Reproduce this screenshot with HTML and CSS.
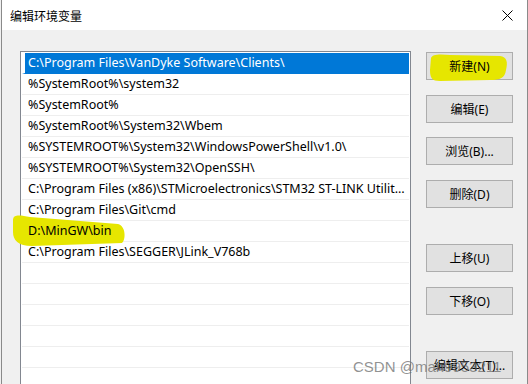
FILE: index.html
```html
<!DOCTYPE html>
<html lang="zh-CN">
<head>
    <meta charset="UTF-8">
    <meta name="viewport" content="width=device-width, initial-scale=1.0">
    <title>编辑环境变量</title>
    <link rel="stylesheet" href="styles.css">
</head>
<body>

    <div class="dialog">
        <div class="titlebar">
            <span class="title">编辑环境变量</span>
            <svg class="close" width="11" height="11" viewBox="0 0 11 11">
                <path d="M0.5 0.5 L10.5 10.5 M10.5 0.5 L0.5 10.5" stroke="#000" stroke-width="1" fill="none"/>
            </svg>
        </div>

        <div class="content">
            <div class="list">
                <div class="row selected"><span>C:\Program Files\VanDyke Software\Clients\</span></div>
                <div class="row"><span>%SystemRoot%\system32</span></div>
                <div class="row"><span>%SystemRoot%</span></div>
                <div class="row"><span>%SystemRoot%\System32\Wbem</span></div>
                <div class="row"><span>%SYSTEMROOT%\System32\WindowsPowerShell\v1.0\</span></div>
                <div class="row"><span>%SYSTEMROOT%\System32\OpenSSH\</span></div>
                <div class="row"><span>C:\Program Files (x86)\STMicroelectronics\STM32 ST-LINK Utility\ST-LINK Utility</span></div>
                <div class="row"><span>C:\Program Files\Git\cmd</span></div>
                <div class="row"><span>D:\MinGW\bin</span></div>
                <div class="row"><span>C:\Program Files\SEGGER\JLink_V768b</span></div>
                <div class="row"><span></span></div>
                <div class="row"><span></span></div>
                <div class="row"><span></span></div>
                <div class="row"><span></span></div>
                <div class="row"><span></span></div>
                <div class="row"><span></span></div>
            </div>

            <div class="buttons">
                <button class="btn"><span>新建(N)</span></button>
                <button class="btn"><span>编辑(E)</span></button>
                <button class="btn"><span>浏览(B)...</span></button>
                <button class="btn"><span>删除(D)</span></button>
                <button class="btn sep"><span>上移(U)</span></button>
                <button class="btn"><span>下移(O)</span></button>
                <button class="btn sep"><span>编辑文本(T)...</span></button>
            </div>
        </div>
    </div>

    <!-- highlighter strokes -->
    <svg class="marks" width="528" height="384" viewBox="0 0 528 384">
        <path d="M431 58 C432 54 440 54 450 55 L500 56 C507 57 508 62 506 70 C505 78 500 80 490 80 L440 81 C432 81 430 78 430 70 Z" fill="#e6e600"/>
        <path d="M13 220 C13 214 20 215 30 217 L118 224 C126 226 126 240 122 243 L32 246 C18 246 13 240 13 232 Z" fill="#e6e600"/>
    </svg>

    <div class="watermark">CSDN @man9953211</div>

</body>
</html>
```

FILE: styles.css
```css
body {
    margin: 0;
    height: 384px;
    overflow: hidden;
    background-color: #f0f0f0;
    font-family: "Noto Sans", "Noto Sans CJK SC", sans-serif;
    font-size: 12px;
    color: #000;
}

.dialog {
    margin-left: 1px;
    width: 527px;
    min-height: 384px;
    box-sizing: border-box;
    border-left: 1px solid #8a8a8a;
    border-right: 1px solid #8a8a8a;
    background-color: #f0f0f0;
}

.titlebar {
    height: 30px;
    background-color: #fff;
    display: flex;
    align-items: center;
    justify-content: space-between;
    padding: 0 14px 0 8px;
}

.title {
    font-family: "Noto Sans CJK SC", sans-serif;
    font-size: 12px;
}

.close {
    display: block;
}

.content {
    display: flex;
    gap: 15px;
    padding: 21px 14px 0 18px;
}

.list {
    width: 391px;
    height: 400px;
    box-sizing: border-box;
    border: 1px solid #828790;
    border-bottom: none;
    background-color: #fff;
    padding: 1px 1px 0 1px;
    font-size: 12.5px;
}

.row {
    height: 20px;
    line-height: 20px;
    border-bottom: 1px solid #eeeeee;
    padding: 0 4px 0 6px;
}

.row span {
    display: block;
    position: relative;
    z-index: 2;
    overflow: hidden;
    white-space: nowrap;
    text-overflow: ellipsis;
}

.row.selected {
    background-color: #0078d7;
    border-left: 3px solid #fff;
    border-bottom-color: #0078d7;
    padding-left: 3px;
}

.row.selected span {
    color: #fff;
}

.buttons {
    display: flex;
    flex-direction: column;
    gap: 14.5px;
    padding-top: 1px;
    width: 87px;
}

.btn {
    height: 28px;
    padding: 0;
    border: 1px solid #adadad;
    background-color: #e1e1e1;
    font-family: inherit;
    font-size: 12px;
    color: #000;
}

.btn.sep {
    margin-top: 22px;
}

.btn span {
    position: relative;
    z-index: 2;
}

.marks {
    position: absolute;
    top: 0;
    left: 0;
    z-index: 1;
}

.watermark {
    position: absolute;
    left: 353px;
    top: 358px;
    z-index: 3;
    font-family: "Liberation Sans", sans-serif;
    font-size: 15px;
    color: rgba(110, 110, 110, 0.75);
    white-space: nowrap;
}
```
